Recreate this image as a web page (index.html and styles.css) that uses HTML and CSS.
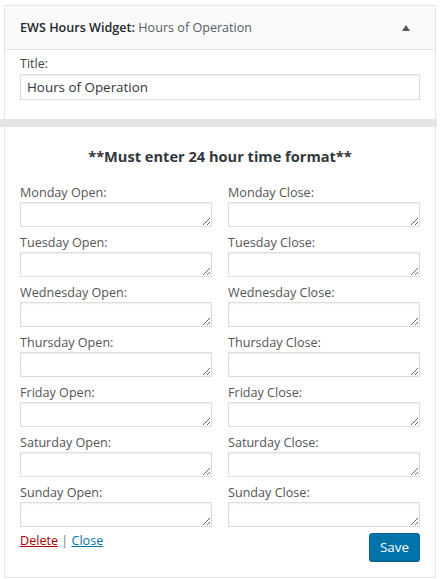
FILE: index.html
```html
<!DOCTYPE html>
<html lang="en">
<head>
<meta charset="UTF-8">
<meta name="viewport" content="width=device-width, initial-scale=1.0">
<title>EWS Hours Widget</title>
<link rel="stylesheet" href="styles.css">
</head>
<body>
<div class="widget">
  <div class="widget-top">
    <h3>EWS Hours Widget: <span class="in-title">Hours of Operation</span></h3>
    <span class="toggle"></span>
  </div>
  <div class="widget-inside">
    <label class="field-label" for="title">Title:</label>
    <input class="title-input" id="title" type="text" value="Hours of Operation">
  </div>
</div>

<div class="band"></div>

<div class="hours-box">
  <h2>**Must enter 24 hour time format**</h2>
  <div class="hours-grid">
    <div class="field"><label>Monday Open:</label><textarea></textarea></div>
    <div class="field"><label>Monday Close:</label><textarea></textarea></div>
    <div class="field"><label>Tuesday Open:</label><textarea></textarea></div>
    <div class="field"><label>Tuesday Close:</label><textarea></textarea></div>
    <div class="field"><label>Wednesday Open:</label><textarea></textarea></div>
    <div class="field"><label>Wednesday Close:</label><textarea></textarea></div>
    <div class="field"><label>Thursday Open:</label><textarea></textarea></div>
    <div class="field"><label>Thursday Close:</label><textarea></textarea></div>
    <div class="field"><label>Friday Open:</label><textarea></textarea></div>
    <div class="field"><label>Friday Close:</label><textarea></textarea></div>
    <div class="field"><label>Saturday Open:</label><textarea></textarea></div>
    <div class="field"><label>Saturday Close:</label><textarea></textarea></div>
    <div class="field"><label>Sunday Open:</label><textarea></textarea></div>
    <div class="field"><label>Sunday Close:</label><textarea></textarea></div>
  </div>
  <div class="controls">
    <div class="links"><a href="#" class="delete">Delete</a> | <a href="#" class="close">Close</a></div>
    <button class="save">Save</button>
  </div>
</div>
</body>
</html>
```

FILE: styles.css
```css
body {
  font-family: "Open Sans", "Noto Sans", Arial, sans-serif;
  font-size: 12.6px;
  color: #444;
  margin: 0;
  padding: 5px 0 0;
  background-color: #fff;
}
.widget {
  margin: 0 5px 0 4px;
  border: 1px solid #e5e5e5;
  border-bottom: none;
  background-color: #fff;
}
.widget-top {
  display: flex;
  align-items: center;
  justify-content: space-between;
  height: 43px;
  padding: 0 15px;
  background-color: #fafafa;
  border-bottom: 1px solid #e5e5e5;
}
.widget-top h3 {
  margin: 0;
  font-size: 12.6px;
  font-weight: 600;
  color: #23282d;
}
.in-title {
  font-weight: 400;
  color: #555d66;
}
.toggle {
  width: 0;
  height: 0;
  margin-right: 10px;
  border-left: 4px solid transparent;
  border-right: 4px solid transparent;
  border-bottom: 6px solid #555;
}
.widget-inside {
  padding: 5px 15px 19px;
}
.field-label {
  display: block;
  line-height: 18px;
  color: #444;
}
.title-input {
  display: block;
  box-sizing: border-box;
  width: 100%;
  height: 26px;
  margin-top: 1px;
  padding: 0 6px;
  border: 1px solid #ddd;
  font-family: inherit;
  font-size: 13.4px;
  color: #32373c;
  box-shadow: inset 0 1px 2px rgba(0, 0, 0, 0.07);
}
.band {
  height: 8px;
  width: 437px;
  background-color: #e5e5e5;
}
.hours-box {
  margin: 0 5px 0 4px;
  padding: 18px 15px 16px;
  border: 1px solid #e5e5e5;
  border-top: none;
}
.hours-box h2 {
  margin: 0 0 17px;
  text-align: center;
  font-size: 14.6px;
  line-height: 22px;
  font-weight: 700;
  color: #32373c;
}
.hours-grid {
  display: grid;
  grid-template-columns: 1fr 1fr;
  column-gap: 16px;
  row-gap: 7px;
}
.field label {
  display: block;
  line-height: 18px;
  color: #555;
}
.field textarea {
  display: block;
  box-sizing: border-box;
  width: 100%;
  height: 25px;
  margin: 0;
  border: 1px solid #ddd;
  resize: both;
  box-shadow: inset 0 1px 2px rgba(0, 0, 0, 0.07);
}
.controls {
  display: flex;
  justify-content: space-between;
  align-items: flex-start;
  margin-top: 5px;
}
.links {
  line-height: 18px;
  color: #72777c;
}
.links a.delete {
  color: #a00;
}
.links a.close {
  color: #0073aa;
}
.save {
  height: 28px;
  margin-top: 1px;
  padding: 0 10px;
  border: 1px solid #006799;
  border-radius: 3px;
  background-color: #0073aa;
  color: #fff;
  font-family: inherit;
  font-size: 13.4px;
  box-shadow: 0 1px 0 #006799;
}
```
